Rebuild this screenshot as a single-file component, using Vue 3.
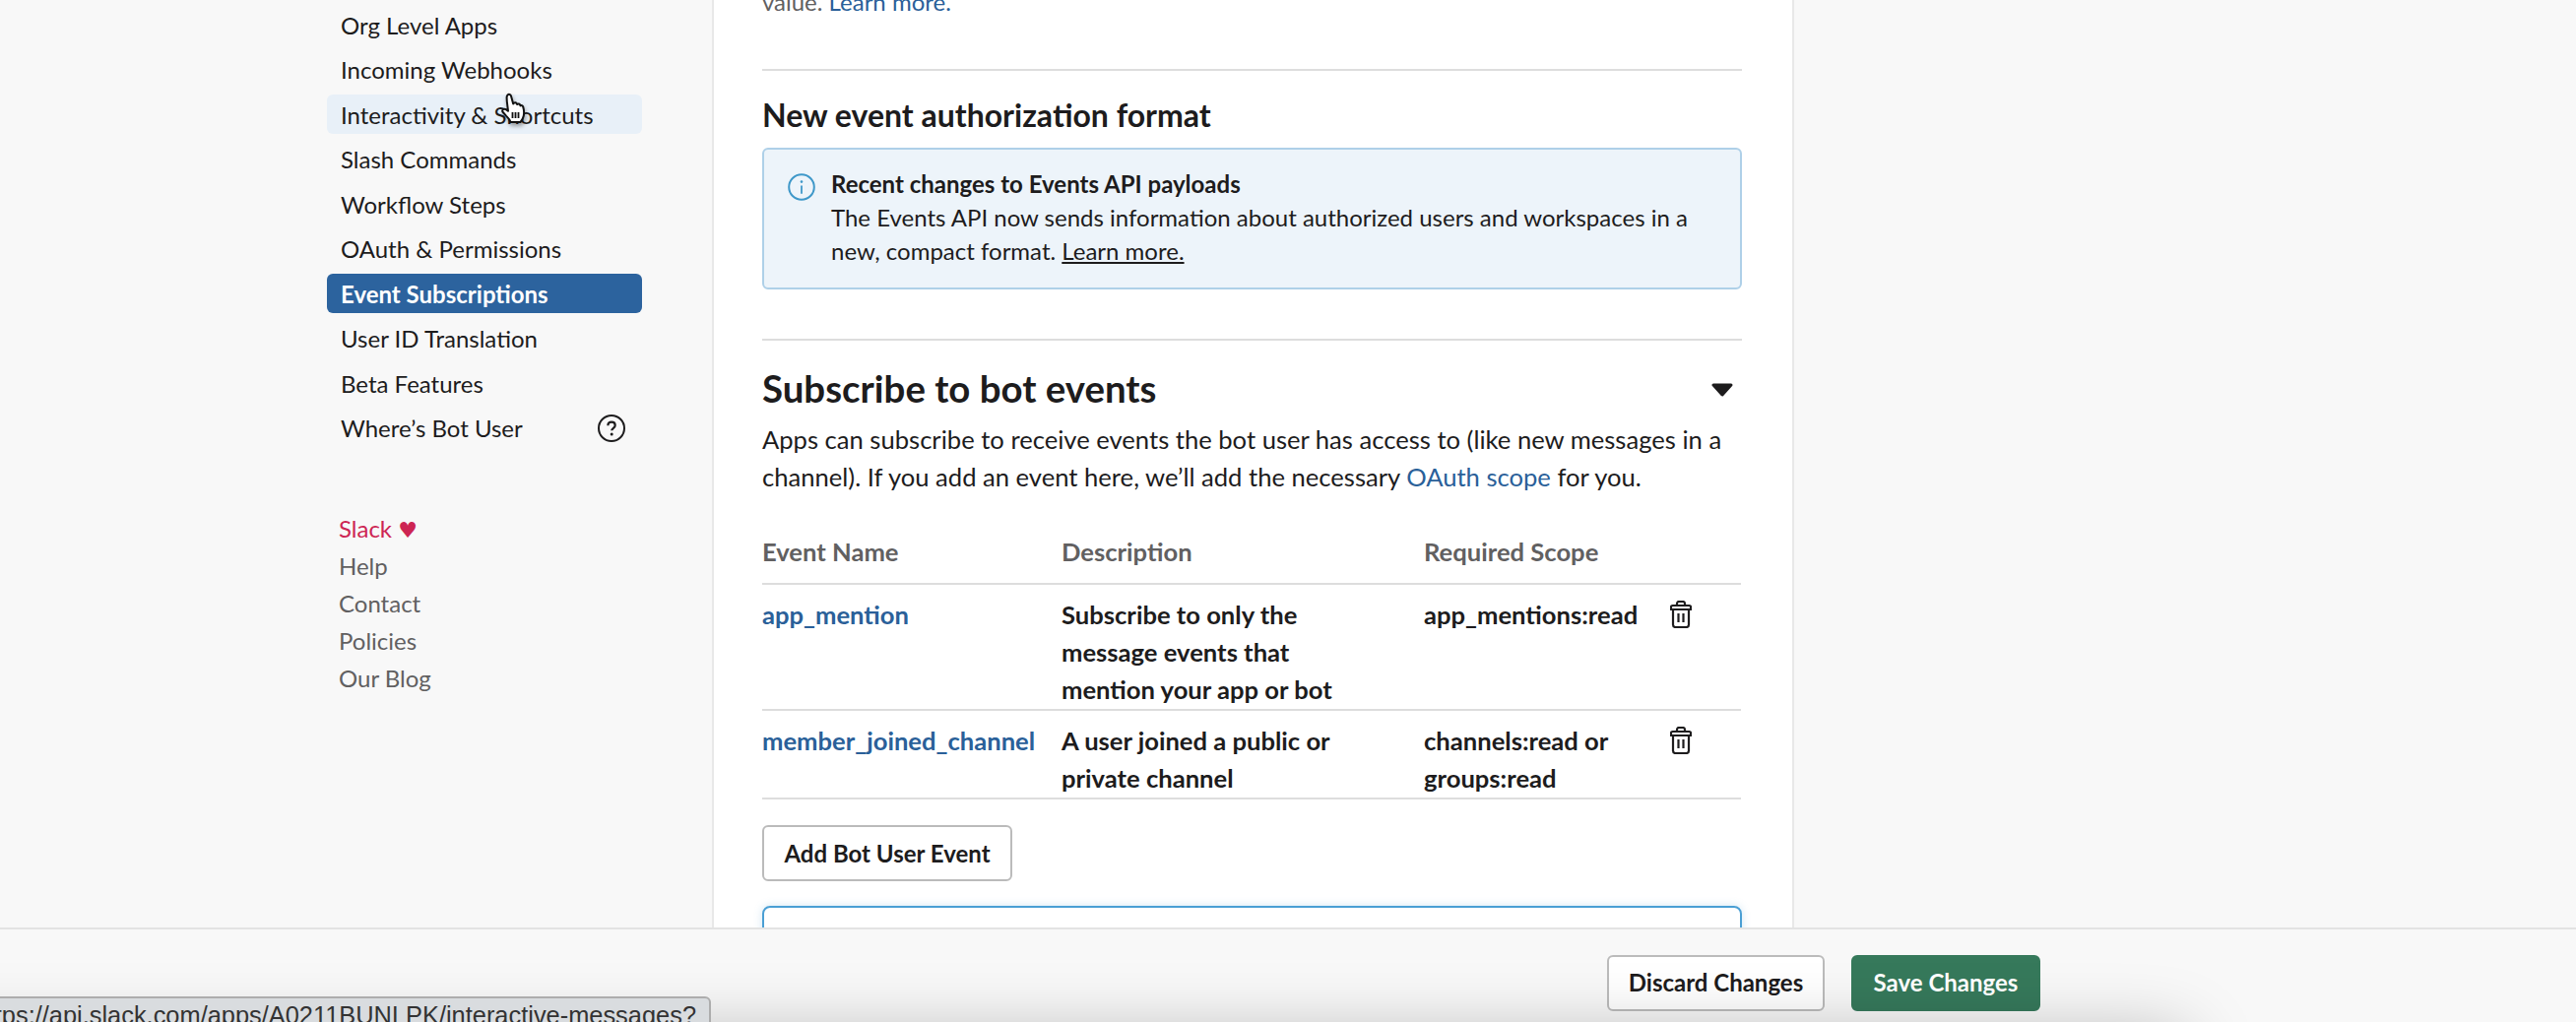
<template>
  <div class="page">
    <div class="main">
      <aside class="sidebar">
        <nav class="nav">
          <a
            v-for="item in navItems"
            :key="item.label"
            class="nav-item"
            :class="{ hover: item.hover, active: item.active }"
          >
            <span>{{ item.label }}</span>
            <svg v-if="item.help" class="help-icon" viewBox="0 0 28 28" width="28" height="28">
              <circle cx="14" cy="14" r="13" fill="none" stroke="#1d1c1d" stroke-width="2" />
              <path d="M10.4 11.2c0-2.2 1.6-3.5 3.7-3.5s3.6 1.3 3.6 3.2c0 2.9-3.5 2.8-3.5 5.4" fill="none" stroke="#1d1c1d" stroke-width="2.2" />
              <circle cx="14.2" cy="20" r="1.5" fill="#1d1c1d" />
            </svg>
          </a>
        </nav>
        <ul class="foot-links">
          <li class="love">Slack <span class="heart">♥</span></li>
          <li>Help</li>
          <li>Contact</li>
          <li>Policies</li>
          <li>Our Blog</li>
        </ul>
      </aside>

      <section class="content">
        <p class="cut-line">value. <a class="link">Learn more.</a></p>
        <hr class="rule first-rule" />
        <h4 class="small-title">New event authorization format</h4>
        <div class="callout">
          <svg class="info-icon" viewBox="0 0 28 28" width="28" height="28">
            <circle cx="14" cy="14" r="12.8" fill="none" stroke="#3f98c9" stroke-width="2" />
            <circle cx="14" cy="8.6" r="1.3" fill="#3f98c9" />
            <path d="M14 12.4v8.4" stroke="#3f98c9" stroke-width="1.8" />
          </svg>
          <div>
            <strong>Recent changes to Events API payloads</strong>
            <p>The Events API now sends information about authorized users and workspaces in a new, compact format. <u>Learn more.</u></p>
          </div>
        </div>
        <hr class="rule second-rule" />
        <div class="section-head">
          <h3>Subscribe to bot events</h3>
          <svg class="caret" viewBox="0 0 24 14" width="24" height="14">
            <path d="M3 2h18l-9 10z" fill="#1d1c1d" stroke="#1d1c1d" stroke-width="3" stroke-linejoin="round" />
          </svg>
        </div>
        <p class="intro">
          Apps can subscribe to receive events the bot user has access to (like new messages in a channel). If you add an event here, we’ll add the necessary <a class="link">OAuth scope</a> for you.
        </p>
        <div class="events">
          <div class="events-row events-head">
            <span>Event Name</span>
            <span>Description</span>
            <span>Required Scope</span>
          </div>
          <div v-for="ev in events" :key="ev.name" class="events-row">
            <a class="link">{{ ev.name }}</a>
            <span class="desc">{{ ev.desc }}</span>
            <span>{{ ev.scope }}</span>
            <svg class="trash" viewBox="0 0 22 28" width="22" height="28">
              <path d="M7 5V3.2C7 2 7.8 1 9 1h4c1.200 0 2 1 2 2.200V5" fill="none" stroke="#1d1c1d" stroke-width="2.2" />
              <path d="M2.500 5h17c.8 0 1.500.7 1.500 1.500V9H1V6.500C1 5.700 1.700 5 2.500 5z" fill="none" stroke="#1d1c1d" stroke-width="2.2" />
              <path d="M3 9v15.500C3 26 4 27 5.500 27h11c1.500 0 2.500-1 2.500-2.500V9" fill="none" stroke="#1d1c1d" stroke-width="2.2" />
              <path d="M8.500 13v9M13.500 13v9" stroke="#1d1c1d" stroke-width="2.2" />
            </svg>
          </div>
        </div>
        <button class="btn add-btn">Add Bot User Event</button>
        <div class="focus-box"></div>
      </section>
      <div class="right-fill"></div>
    </div>

    <footer class="save-bar">
      <button class="btn">Discard Changes</button>
      <button class="btn save">Save Changes</button>
    </footer>

    <div class="window-shadow"></div>
    <div class="status-url">https://api.slack.com/apps/A0211BUNLPK/interactive-messages?</div>

    <svg class="cursor" viewBox="0 0 26 36" width="26" height="36">
      <path d="M6.500 2.500c1.300-1.200 3-.6 3.500 1l2.200 8 .6-.8c1-.9 2.400-.6 3 .5l.4.8c.9-.9 2.500-.6 3 .6l.3.8c1-.6 2.300-.2 2.700 1 .9 3 1.200 6 .6 9.100-.5 2.700-1.700 4.800-3.300 6.500H9.500c-.7-2.500-2.200-4.200-4.500-6.400L1.800 20c-1.200-1.300-.5-3 1-3.300 1.300-.3 2.600.5 4.200 2L5.800 9 5.600 5c0-1 .3-1.900.9-2.500z" fill="#fff" stroke="#111" stroke-width="2" stroke-linejoin="round" />
      <path d="M11.500 20v6M14.500 20v6M17.500 20v6" stroke="#111" stroke-width="1.800" />
    </svg>
  </div>
</template>

<script setup>
const navItems = [
  { label: 'Org Level Apps' },
  { label: 'Incoming Webhooks' },
  { label: 'Interactivity & Shortcuts', hover: true },
  { label: 'Slash Commands' },
  { label: 'Workflow Steps' },
  { label: 'OAuth & Permissions' },
  { label: 'Event Subscriptions', active: true },
  { label: 'User ID Translation' },
  { label: 'Beta Features' },
  { label: 'Where’s Bot User', help: true },
];

const events = [
  {
    name: 'app_mention',
    desc: 'Subscribe to only the message events that mention your app or bot',
    scope: 'app_mentions:read',
  },
  {
    name: 'member_joined_channel',
    desc: 'A user joined a public or private channel',
    scope: 'channels:read or groups:read',
  },
];
</script>

<style>
html,
body {
  margin: 0;
  background: #f8f8f8;
}
</style>

<style scoped>
.page {
  position: relative;
  width: 2616px;
  height: 1038px;
  overflow: hidden;
  background: #f8f8f8;
  color: #1d1c1d;
  font-family: Lato, "Liberation Sans", sans-serif;
  font-size: 24px;
}
.main {
  display: flex;
  height: 942px;
  overflow: hidden;
}
.sidebar {
  width: 723px;
  box-sizing: border-box;
  padding: 5px 0 0 332px;
  flex: none;
}
.nav {
  display: flex;
  flex-direction: column;
  gap: 5.5px;
  width: 320px;
}
.nav-item {
  display: flex;
  align-items: center;
  justify-content: space-between;
  height: 40px;
  padding: 0 17px 0 14px;
  border-radius: 6px;
}
.nav-item.hover {
  background: #e8f0f8;
}
.nav-item.active {
  background: #2c639e;
  color: #fff;
  font-weight: 700;
}
.help-icon {
  flex: none;
}
.foot-links {
  list-style: none;
  margin: 63px 0 0 12px;
  padding: 0;
  line-height: 38px;
  color: #616061;
}
.foot-links li {
  height: 38px;
}
.love {
  color: #cd2553;
}
.heart {
  font-size: 22px;
  line-height: 1;
  font-family: "DejaVu Sans", sans-serif;
}
.content {
  width: 1099px;
  box-sizing: border-box;
  padding: 0 51px 0 49px;
  background: #fff;
  border-left: 2px solid #e8e8e8;
  border-right: 2px solid #e8e8e8;
  flex: none;
}
.cut-line {
  margin: -15px 0 0;
  line-height: 34px;
  color: #616061;
}
.link {
  color: #2a6099;
}
.rule {
  border: 0;
  height: 2px;
  background: #dddddd;
  margin: 0;
}
.first-rule {
  margin-top: 51px;
}
.small-title {
  margin: 25px 0 0;
  font-size: 32px;
  line-height: 40px;
  font-weight: 700;
}
.callout {
  display: flex;
  gap: 16px;
  box-sizing: border-box;
  height: 144px;
  margin-top: 13px;
  padding: 18px 24px 0 24px;
  background: #edf4fa;
  border: 2px solid #aed0e8;
  border-radius: 6px;
  line-height: 34px;
}
.info-icon {
  flex: none;
  margin-top: 6px;
}
.callout strong {
  font-weight: 700;
}
.callout p {
  margin: 0;
}
.second-rule {
  margin-top: 50px;
}
.section-head {
  display: flex;
  align-items: center;
  justify-content: space-between;
  height: 50px;
  margin-top: 23px;
  padding-right: 8px;
}
.section-head h3 {
  margin: 0;
  font-size: 38.4px;
  font-weight: 700;
}
.caret {
  margin-top: 4px;
}
.intro {
  margin: 8px 0 0;
  font-size: 25.6px;
  line-height: 38px;
}
.events {
  margin-top: 38px;
  width: 994px;
  font-size: 25.6px;
  font-weight: 700;
  line-height: 38px;
}
.events-row {
  display: grid;
  grid-template-columns: 304px 368px 250px 1fr;
  padding: 11px 0 1px;
  border-bottom: 2px solid #dddddd;
}
.events-row .desc {
  padding-right: 48px;
}
.events-head {
  padding: 0 0 13px;
  color: #616061;
}
.trash {
  margin: 5px 0 0 0;
}
.btn {
  box-sizing: border-box;
  height: 57px;
  padding: 0 21px;
  background: #fff;
  border: 2px solid #bbbbbb;
  border-radius: 6px;
  color: #1d1c1d;
  font-family: inherit;
  font-size: 24px;
  font-weight: 700;
}
.add-btn {
  display: block;
  width: 254px;
  margin-top: 26px;
  padding: 0;
}
.focus-box {
  height: 60px;
  margin-top: 25px;
  border: 2px solid #4a9fd4;
  border-radius: 8px;
  box-shadow: 0 0 8px rgba(74, 159, 212, 0.25);
}
.right-fill {
  flex: 1;
}
.save-bar {
  display: flex;
  gap: 27px;
  box-sizing: border-box;
  height: 96px;
  padding: 26px 0 0 1632px;
  background: #f8f8f8;
  border-top: 2px solid #e3e3e3;
}
.save-bar .btn {
  width: 221px;
  padding: 0 0 2px;
}
.save-bar .save {
  width: 192px;
  background: #36795b;
  border-color: #36795b;
  color: #fff;
}
.window-shadow {
  position: absolute;
  left: -200px;
  top: 1052px;
  width: 2420px;
  height: 100px;
  box-shadow: 0 0 70px rgba(0, 0, 0, 0.28);
}
.status-url {
  position: absolute;
  left: -100px;
  top: 1012px;
  width: 822px;
  box-sizing: border-box;
  height: 50px;
  padding: 3px 13px 0 0;
  background: #d9dcdf;
  border: 2px solid #adadad;
  border-radius: 6px;
  color: #333;
  font-family: "Liberation Sans", sans-serif;
  font-size: 25.4px;
  text-align: right;
  white-space: nowrap;
}
.cursor {
  position: absolute;
  left: 509px;
  top: 94px;
  filter: drop-shadow(1px 3px 2px rgba(0, 0, 0, 0.35));
}
</style>
